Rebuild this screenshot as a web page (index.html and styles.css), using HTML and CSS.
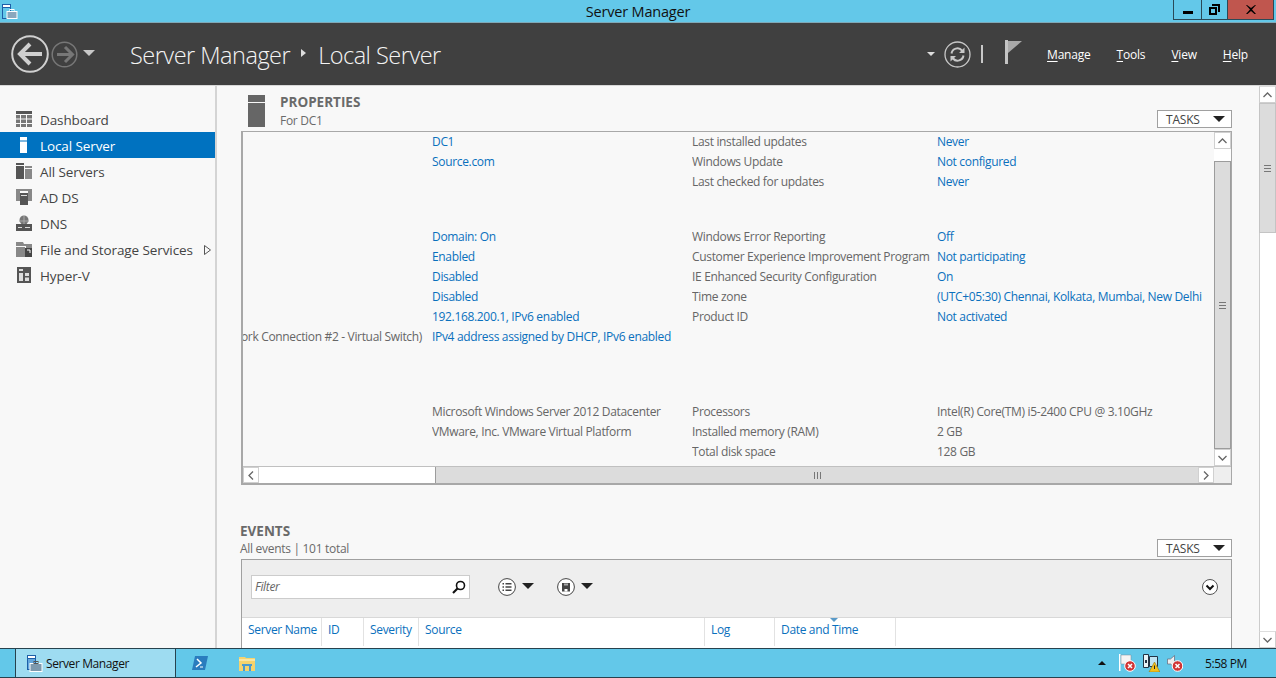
FILE: index.html
```html
<!DOCTYPE html>
<html lang="en">
<head>
<meta charset="utf-8">
<title>Server Manager</title>
<link rel="stylesheet" href="styles.css">
</head>
<body>
<div class="window">
  <header class="titlebar">
    <svg class="app-icon" width="18" height="19" viewBox="0 0 18 19"><rect x="2.500" y="3.500" width="8" height="14" fill="#63c8e9" stroke="#1d5fa8"/><rect x="2.500" y="3.500" width="8" height="3" fill="#fff" stroke="#1d5fa8"/><rect x="7" y="10.500" width="10" height="7" fill="#8aa7bd" stroke="#fff"/><rect x="10" y="8.500" width="4" height="2" fill="none" stroke="#fff"/></svg>
    <div class="title">Server Manager</div>
    <div class="winbtns">
      <div class="winbtn b-min"><span class="min-glyph"></span></div>
      <div class="winbtn b-res"><svg width="11" height="11" viewBox="0 0 11 11"><path d="M3 0h8v8H9V2H3z" fill="#000"/><path d="M0 3h8v8H0zM2 5v4h4V5z" fill="#000" fill-rule="evenodd"/></svg></div>
      <div class="winbtn close"><svg width="10" height="9" viewBox="0 0 10 9"><path d="M1 0l4 3 4-3h1L6 4.500 10 9H8.500L5 6 1.500 9H0l4-4.500L0 0z" fill="#000"/></svg></div>
    </div>
  </header>

  <div class="toolbar">
    <svg class="nav-back" width="38" height="38" viewBox="0 0 38 38"><circle cx="19" cy="19" r="17.800" fill="none" stroke="#d0d0d0" stroke-width="2"/><path d="M19 9L9 19l10 10M10 19h21" fill="none" stroke="#d0d0d0" stroke-width="4"/></svg>
    <svg class="nav-fwd" width="27" height="27" viewBox="0 0 27 27"><circle cx="13.500" cy="13.500" r="12.300" fill="none" stroke="#777" stroke-width="1.500"/><path d="M14 6l7.500 7.500L14 21M21 13.500H6" fill="none" stroke="#777" stroke-width="3"/></svg>
    <span class="caret-down light nav-caret"></span>
    <div class="crumbs">
      <span>Server Manager</span>
      <span class="crumb-sep"></span>
      <span>Local Server</span>
    </div>
    <div class="tools">
      <span class="caret-down small"></span>
      <svg class="refresh" width="27" height="27" viewBox="0 0 27 27"><circle cx="13.500" cy="13.500" r="12.500" fill="none" stroke="#c8c8c8" stroke-width="1.300"/><path d="M7.500 12.500a6 6 0 0 1 10.500-3l1.500 1.500M19.500 14.500a6 6 0 0 1-10.500 3L7.500 16" fill="none" stroke="#c8c8c8" stroke-width="2"/><path d="M20.500 6.500v5.500H15zM6.500 20.500V15H12z" fill="#c8c8c8"/></svg>
      <span class="tool-sep"></span>
      <svg class="flag" width="18" height="24" viewBox="0 0 18 24"><path d="M0 0h3v24H0z" fill="#c4c4c4"/><path d="M3 1h14L3 13z" fill="#a9a9a9"/></svg>
      <nav class="menu">
        <span class="menu-item"><u>M</u>anage</span>
        <span class="menu-item"><u>T</u>ools</span>
        <span class="menu-item"><u>V</u>iew</span>
        <span class="menu-item"><u>H</u>elp</span>
      </nav>
    </div>
  </div>

  <div class="body">
    <aside class="sidebar">
      <div class="nav-item">
        <svg width="16" height="16" viewBox="0 0 16 16"><path d="M0 0h16v3H0z" fill="#555"/><path d="M0 4h4v3.500H0zM5 4h5v3.500H5zM11 4h5v3.500h-5zM0 8.500h4V12H0zM5 8.500h5V12H5zM11 8.500h5V12h-5zM0 13h4v3H0zM5 13h5v3H5zM11 13h5v3h-5z" fill="#777"/></svg>
        <span>Dashboard</span>
      </div>
      <div class="nav-item active">
        <svg width="16" height="16" viewBox="0 0 16 16"><path d="M4 0h7v3.500H4z" fill="#fff"/><path d="M4 4.500h7V16H4z" fill="#fff"/></svg>
        <span>Local Server</span>
      </div>
      <div class="nav-item">
        <svg width="16" height="16" viewBox="0 0 16 16"><path d="M0 0h8v2H0z" fill="#555"/><path d="M0 3h8v13H0z" fill="#555"/><path d="M9 3h7v2H9zM9 6h7v10H9z" fill="#888"/></svg>
        <span>All Servers</span>
      </div>
      <div class="nav-item">
        <svg width="16" height="16" viewBox="0 0 16 16"><path d="M0 0h4v12H0zM12 0h4v12h-4z" fill="#888"/><path d="M4 0h8v2H4z" fill="#888"/><path d="M4 4h8v12H4z" fill="#555"/><path d="M5 6h6v1H5z" fill="#ddd"/></svg>
        <span>AD DS</span>
      </div>
      <div class="nav-item">
        <svg width="16" height="16" viewBox="0 0 16 16"><circle cx="8" cy="5" r="4.500" fill="#777"/><path d="M3 6h10M8 1v8" stroke="#aaa" stroke-width="1"/><path d="M0 9h16v7H0z" fill="#555"/><path d="M2 12h4v1H2zM9 12h5v1H9z" fill="#ddd"/></svg>
        <span>DNS</span>
      </div>
      <div class="nav-item">
        <svg width="16" height="16" viewBox="0 0 16 16"><path d="M0 1h7l1 2h8v2H0zM0 6h9v10H0z" fill="#888"/><path d="M9 7h7v9H9z" fill="#444"/><path d="M10 5h6v2h-6z" fill="#888"/><path d="M11 9h3v3" fill="none" stroke="#fff"/></svg>
        <span>File and Storage Services</span>
        <svg class="nav-arrow" width="7" height="10" viewBox="0 0 7 10"><path d="M.500.500l6 4.500-6 4.500z" fill="none" stroke="#555"/></svg>
      </div>
      <div class="nav-item">
        <svg width="16" height="16" viewBox="0 0 16 16"><path d="M1 0h14v16H1z" fill="#555"/><path d="M3 2h4v2H3zM3 6h4v8H3zM9 6h4v3H9zM9 10.500h4V14H9z" fill="#ddd"/></svg>
        <span>Hyper-V</span>
      </div>
    </aside>

    <main class="content">
      <section class="props">
        <div class="section-head props-head">
          <svg class="props-icon" width="20" height="32" viewBox="0 0 20 32"><rect width="17" height="7" fill="#666" x="0"/><rect x="0" width="17" height="24" y="8" fill="#666"/></svg>
          <div class="heading">
            <div class="h-title">PROPERTIES</div>
            <div class="h-sub">For DC1</div>
          </div>
          <button class="tasks">TASKS<span class="caret-down dark"></span></button>
        </div>

        <div class="props-box">
          <div class="props-view">
            <div class="props-rows">
              <div class="group">
                <div class="row"><div class="c1"></div><div class="link">DC1</div><div>Last installed updates</div><div class="link">Never</div></div>
                <div class="row"><div class="c1"></div><div class="link">Source.com</div><div>Windows Update</div><div class="link">Not configured</div></div>
                <div class="row"><div class="c1"></div><div></div><div>Last checked for updates</div><div class="link">Never</div></div>
              </div>
              <div class="group g2">
                <div class="row"><div class="c1"></div><div class="link">Domain: On</div><div>Windows Error Reporting</div><div class="link">Off</div></div>
                <div class="row"><div class="c1"></div><div class="link">Enabled</div><div>Customer Experience Improvement Program</div><div class="link">Not participating</div></div>
                <div class="row"><div class="c1"></div><div class="link">Disabled</div><div>IE Enhanced Security Configuration</div><div class="link">On</div></div>
                <div class="row"><div class="c1"></div><div class="link">Disabled</div><div>Time zone</div><div class="link">(UTC+05:30) Chennai, Kolkata, Mumbai, New Delhi</div></div>
                <div class="row"><div class="c1"></div><div class="link">192.168.200.1, IPv6 enabled</div><div>Product ID</div><div class="link">Not activated</div></div>
                <div class="row"><div class="c1"><span>Network Connection #2 - Virtual Switch)</span></div><div class="link">IPv4 address assigned by DHCP, IPv6 enabled</div><div></div><div></div></div>
              </div>
              <div class="group g3">
                <div class="row"><div class="c1"></div><div>Microsoft Windows Server 2012 Datacenter</div><div>Processors</div><div>Intel(R) Core(TM) i5-2400 CPU @ 3.10GHz</div></div>
                <div class="row"><div class="c1"></div><div>VMware, Inc. VMware Virtual Platform</div><div>Installed memory (RAM)</div><div>2 GB</div></div>
                <div class="row"><div class="c1"></div><div></div><div>Total disk space</div><div>128 GB</div></div>
              </div>
            </div>
            <div class="vscroll">
              <div class="sb-btn"><svg width="9" height="6" viewBox="0 0 9 6"><path d="M.500 5l4-4 4 4" fill="none" stroke="#666" stroke-width="1.300"/></svg></div>
              <div class="v-gap"></div>
              <div class="v-thumb"><span class="grip"></span></div>
              <div class="sb-btn"><svg width="9" height="6" viewBox="0 0 9 6"><path d="M.500 1l4 4 4-4" fill="none" stroke="#666" stroke-width="1.300"/></svg></div>
            </div>
          </div>
          <div class="hscroll">
            <div class="sb-btn h"><svg width="6" height="9" viewBox="0 0 6 9"><path d="M5 .500l-4 4 4 4" fill="none" stroke="#666" stroke-width="1.300"/></svg></div>
            <div class="h-gap"></div>
            <div class="h-thumb"><span class="grip-v"></span></div>
            <div class="sb-btn h"><svg width="6" height="9" viewBox="0 0 6 9"><path d="M1 .500l4 4-4 4" fill="none" stroke="#666" stroke-width="1.300"/></svg></div>
            <div class="corner"></div>
          </div>
        </div>
      </section>

      <section class="events">
        <div class="section-head events-head">
          <div class="heading">
            <div class="h-title">EVENTS</div>
            <div class="h-sub">All events | 101 total</div>
          </div>
          <button class="tasks">TASKS<span class="caret-down dark"></span></button>
        </div>
        <div class="events-box">
          <div class="events-tools">
            <div class="filter">
              <span>Filter</span>
              <svg width="14" height="14" viewBox="0 0 14 14"><circle cx="8.500" cy="5.500" r="4" fill="none" stroke="#111" stroke-width="1.600"/><path d="M5.500 8.500L1 13" stroke="#111" stroke-width="2.200"/></svg>
            </div>
            <div class="round-menu first">
              <svg width="18" height="18" viewBox="0 0 18 18"><circle cx="9" cy="9" r="8.400" fill="#fff" stroke="#444"/><path d="M7.500 5h6v1.500h-6zM7.500 8.300h6v1.500h-6zM7.500 11.500h6V13h-6zM4.500 5H6v1.500H4.500zM4.500 8.300H6v1.500H4.500zM4.500 11.500H6V13H4.500z" fill="#444"/></svg>
              <span class="caret-down dark"></span>
            </div>
            <div class="round-menu">
              <svg width="18" height="18" viewBox="0 0 18 18"><circle cx="9" cy="9" r="8.400" fill="#fff" stroke="#444"/><path d="M5 5h8v8.500H5z" fill="#444"/><path d="M7 5.500h4v2H7z" fill="#a8a8a8"/><path d="M7.500 11h3v2.500h-3z" fill="#fff"/></svg>
              <span class="caret-down dark"></span>
            </div>
            <svg class="expand" width="16" height="16" viewBox="0 0 16 16"><circle cx="8" cy="8" r="7.500" fill="#fff" stroke="#555"/><path d="M4.500 6.500L8 10l3.500-3.500" fill="none" stroke="#111" stroke-width="2"/></svg>
          </div>
          <div class="cols">
            <div class="col w-name">Server Name</div>
            <div class="col w-id">ID</div>
            <div class="col w-sev">Severity</div>
            <div class="col w-src">Source</div>
            <div class="col w-log">Log</div>
            <div class="col w-date">Date and Time<span class="sort-mark"></span></div>
          </div>
        </div>
      </section>
    </main>

    <div class="page-scroll">
      <div class="sb-btn page"><svg width="9" height="6" viewBox="0 0 9 6"><path d="M.500 5l4-4 4 4" fill="none" stroke="#666" stroke-width="1.300"/></svg></div>
      <div class="page-thumb"><span class="grip"></span></div>
      <div class="page-track"></div>
      <div class="sb-btn page"><svg width="9" height="6" viewBox="0 0 9 6"><path d="M.500 1l4 4 4-4" fill="none" stroke="#666" stroke-width="1.300"/></svg></div>
    </div>
  </div>

  <footer class="taskbar">
    <div class="start"></div>
    <div class="task-active">
      <svg width="18" height="19" viewBox="0 0 18 19"><rect x="2.500" y="1.500" width="8" height="14" fill="#63a6dc" stroke="#1d5fa8"/><rect x="2.500" y="1.500" width="8" height="3" fill="#fff" stroke="#1d5fa8"/><rect x="5" y="9.500" width="12" height="8" fill="#7d99ae" stroke="#fff"/><rect x="9" y="7.500" width="4" height="2" fill="none" stroke="#555"/></svg>
      <span>Server Manager</span>
    </div>
    <div class="task-pin ps">
      <svg width="16" height="14" viewBox="0 0 16 14"><path d="M3 0h13l-3 14H0z" fill="#2a7cbe"/><path d="M5 3l4 4-5 4" fill="none" stroke="#fff" stroke-width="1.500"/><path d="M8 11h3" stroke="#fff"/></svg>
    </div>
    <div class="task-pin fe">
      <svg width="16" height="15" viewBox="0 0 16 15"><path d="M0 1h6l1 1h9v13H0z" fill="#f5d36e"/><path d="M0 4h16" stroke="#fff8d8"/><path d="M3 8h10v2H3z" fill="#4a9ad0"/><path d="M4 10h2v5H4zM10 10h2v5h-2z" fill="#4a9ad0"/></svg>
    </div>
    <div class="tray">
      <span class="caret-up"></span>
      <span class="tray-icon">
        <svg width="17" height="18" viewBox="0 0 17 18"><path d="M0 0h1.500v17H0z" fill="#fff"/><path d="M2 1h10v9H2z" fill="#f4f4f4" stroke="#789" stroke-width=".5"/><circle cx="11" cy="12" r="5.300" fill="#d03535" stroke="#fff"/><path d="M9 10l4 4M13 10l-4 4" stroke="#fff" stroke-width="1.500"/></svg>
      </span>
      <span class="tray-icon">
        <svg width="17" height="18" viewBox="0 0 17 18"><path d="M.500.500h5v13h-5z" fill="#e8f4f8" stroke="#234"/><path d="M6.500 2.500h8v10h-8z" fill="#bfe4f2" stroke="#234"/><path d="M2 6h2v3H2z" fill="#234"/><path d="M11.500 8l5.500 10H6z" fill="#f3c01c" stroke="#8a6a00" stroke-width=".5"/><path d="M11 11.500h1v3.500h-1z" fill="#222"/></svg>
      </span>
      <span class="tray-icon">
        <svg width="16" height="18" viewBox="0 0 16 18"><path d="M.500 5h3l4-3.500v12l-4-3.500h-3z" fill="#eee" stroke="#667" stroke-width=".7"/><circle cx="10.500" cy="12" r="5.300" fill="#d03535" stroke="#fff"/><path d="M8.500 10l4 4M12.500 10l-4 4" stroke="#fff" stroke-width="1.500"/></svg>
      </span>
      <span class="clock">5:58 PM</span>
    </div>
  </footer>
</div>
</body>
</html>
```

FILE: styles.css
```css
* { box-sizing: border-box; }
html, body { margin: 0; padding: 0; height: 100%; overflow: hidden; }
body { font-family: "Open Sans", "Noto Sans", sans-serif; font-size: 12px; letter-spacing: -0.33px; color: #666; background: #f8f8f8; }

.window { width: 1276px; height: 678px; display: flex; flex-direction: column; overflow: hidden; }

/* Title bar */
.titlebar { height: 23px; flex: none; background: #63c8e9; border-bottom: 1px solid #7fa9b8; display: flex; position: relative; }
.app-icon { position: absolute; left: 0; top: 1px; }
.title { flex: 1; text-align: center; font-size: 14.500px; line-height: 23px; color: #111; letter-spacing: -0.2px; }
.winbtns { position: absolute; right: 2px; top: 0; height: 20px; display: flex; border: 1px solid #2a4a58; border-top: 0; }
.winbtn { height: 19px; display: flex; align-items: center; justify-content: center; border-right: 1px solid #2a4a58; }
.b-min { width: 28px; }
.b-res { width: 26px; }
.winbtn.close { width: 45px; background: #c0564e; border-right: 0; }
.min-glyph { width: 10px; height: 3px; background: #000; margin-top: 6px; }

/* Toolbar */
.toolbar { height: 62px; flex: none; background: #404040; display: flex; align-items: center; padding-left: 11px; color: #fff; }
.nav-back { flex: none; }
.nav-fwd { flex: none; margin-left: 2px; }
.nav-caret { margin-left: 5px; margin-top: -3px; }
.crumbs { display: flex; align-items: center; margin-left: 35px; font-size: 23.500px; font-weight: 300; letter-spacing: -0.5px; color: #f4f4f4; margin-top: 1px; }
.crumb-sep { width: 0; height: 0; border-left: 5px solid #ddd; border-top: 4px solid transparent; border-bottom: 4px solid transparent; margin: -4px 12px 0 11px; }
.tools { margin-left: auto; display: flex; align-items: center; padding-right: 28px; }
.refresh { margin-left: 9px; }
.tool-sep { width: 2px; height: 18px; background: #c8c8c8; margin-left: 10px; }
.flag { margin-left: 22px; margin-top: -5px; }
.menu { display: flex; margin-left: 24px; gap: 26px; font-size: 12px; color: #fff; letter-spacing: -0.2px; }
.menu-item u { text-underline-offset: 2px; }

.caret-down { display: inline-block; width: 0; height: 0; border-left: 6px solid transparent; border-right: 6px solid transparent; border-top: 6px solid #111; }
.caret-down.light { border-top-color: #c8c8c8; }
.caret-down.small { border-left-width: 4px; border-right-width: 4px; border-top: 4px solid #ddd; }
.caret-down.dark { border-top-color: #222; }

/* Body */
.body { flex: 1; display: flex; min-height: 0; border-top: 1px solid #d8d8d8; }

.sidebar { width: 217px; flex: none; padding-top: 20px; background: #f8f8f8; border-right: 2px solid #d4d4d4; }
.nav-item { height: 26px; display: flex; align-items: center; padding: 1px 0 0 16px; font-size: 13.500px; letter-spacing: -0.1px; color: #444; }
.nav-item svg:first-child { flex: none; margin-right: 8px; margin-top: -1px; }
.nav-item.active { background: #0072c0; color: #fff; }
.nav-arrow { margin-left: 11px; }

.content { flex: 1; min-width: 0; padding: 9px 27px 0 24px; overflow: hidden; }

.section-head { display: flex; }
.props-head { height: 36px; padding-left: 7px; }
.props-head .h-sub { margin-top: 2px; }
.props-icon { flex: none; margin-right: 12px; }
.heading { flex: 1; }
.h-title { font-size: 13.500px; font-weight: 700; color: #6a6a6a; line-height: 15px; letter-spacing: 0; }
.h-sub { font-size: 12px; color: #6a6a6a; line-height: 18px; letter-spacing: -0.3px; margin-top: 1px; }
.tasks { flex: none; width: 75px; height: 18px; font: inherit; color: #444; background: #fff; border: 1px solid #a0a0a0; display: flex; align-items: center; justify-content: space-between; padding: 0 6px 0 8px; margin-top: 15px; letter-spacing: -0.2px; }

.props-box { height: 354px; border: 2px solid #a8a8a8; border-top-width: 1px; border-right-width: 1px; display: flex; flex-direction: column; }
.props-view { flex: 1; min-height: 0; display: flex; }
.props-rows { flex: 1; min-width: 0; overflow: hidden; }
.group.g2 { margin-top: 35px; }
.group.g3 { margin-top: 55px; }
.row { display: grid; grid-template-columns: 189px 260px 245px 268px; height: 20px; line-height: 20px; white-space: nowrap; }
.row > div { overflow: hidden; }
.c1 { display: flex; justify-content: flex-end; padding-right: 10px; }
.c1 span { flex: none; }
.link { color: #0a70bd; }

.vscroll { width: 17px; flex: none; display: flex; flex-direction: column; }
.sb-btn { width: 17px; height: 17px; flex: none; display: flex; align-items: center; justify-content: center; background: #fff; border: 1px solid #d0d0d0; }
.v-gap { height: 12px; flex: none; background: #fff; }
.v-thumb { flex: 1; background: #dcdcdc; border: 1px solid #9c9c9c; display: flex; align-items: center; justify-content: center; }
.grip { width: 7px; height: 7px; background: repeating-linear-gradient(to bottom, #777 0 1px, transparent 1px 3px); }

.hscroll { height: 17px; flex: none; display: flex; border-top: 1px solid #c0c0c0; }
.sb-btn.h { height: 16px; width: 16px; }
.h-gap { width: 176px; flex: none; background: #fff; }
.h-thumb { flex: 1; background: #dcdcdc; border-left: 1px solid #9c9c9c; display: flex; align-items: center; justify-content: center; }
.grip-v { width: 7px; height: 7px; background: repeating-linear-gradient(to right, #777 0 1px, transparent 1px 3px); }
.corner { width: 17px; flex: none; background: #eee; }

.events-head { margin-top: 39px; margin-left: -1px; height: 35px; }
.events-head .tasks { margin-top: 15px; }
.events-box { height: 100px; border: 1px solid #a0a0a0; border-bottom: 0; background: #fff; }
.events-tools { height: 58px; background: #eee; border-bottom: 1px solid #d8d8d8; display: flex; align-items: center; padding: 0 13px 4px 9px; }
.filter { width: 219px; height: 24px; background: #fff; border: 1px solid #ccc; display: flex; align-items: center; justify-content: space-between; padding: 0 3px; font-style: italic; }
.round-menu { display: flex; align-items: center; gap: 6px; }
.round-menu.first { margin-left: 28px; margin-right: 23px; }
.round-menu .caret-down { margin-top: -2px; }
.expand { margin-left: auto; }
.cols { display: flex; height: 28px; }
.col { color: #0a70bd; line-height: 24px; padding-left: 6px; border-right: 1px solid #e2e2e2; position: relative; white-space: nowrap; flex: none; }
.w-name { width: 80px; }
.w-id { width: 42px; }
.w-sev { width: 55px; }
.w-src { width: 286px; }
.w-log { width: 70px; }
.w-date { width: 121px; }
.sort-mark { position: absolute; left: 55px; top: 0; width: 0; height: 0; border-left: 4px solid transparent; border-right: 4px solid transparent; border-top: 4px solid #5a9ac8; }

.page-scroll { width: 17px; flex: none; display: flex; flex-direction: column; background: #fff; }
.sb-btn.page { border-top: 1px solid #ddd; border-left: 1px solid #ccc; }
.page-thumb { height: 130px; flex: none; background: #dcdcdc; border: 1px solid #c4c4c4; display: flex; align-items: center; justify-content: center; }
.page-track { flex: 1; border-left: 1px solid #ccc; }

/* Taskbar */
.taskbar { height: 30px; flex: none; background: #63c8e9; border-top: 1px solid #27424e; border-bottom: 1px solid #27424e; display: flex; align-items: center; }
.start { width: 16px; height: 100%; border-right: 1px solid #27424e; }
.task-active { width: 160px; height: 100%; background: #9edcf1; border-right: 1px solid #27424e; display: flex; align-items: center; padding-left: 9px; gap: 3px; color: #111; font-size: 12px; letter-spacing: -0.4px; }
.task-pin { display: flex; align-items: center; }
.task-pin.ps { margin-left: 16px; }
.task-pin.fe { margin-left: 31px; }
.tray { margin-left: auto; display: flex; align-items: center; padding-right: 29px; }
.caret-up { width: 0; height: 0; border-left: 4px solid transparent; border-right: 4px solid transparent; border-bottom: 4px solid #111; margin-right: 13px; }
.tray-icon { display: flex; margin-right: 7px; }
.clock { margin-left: 15px; color: #111; font-size: 12px; letter-spacing: -0.4px; }
```
